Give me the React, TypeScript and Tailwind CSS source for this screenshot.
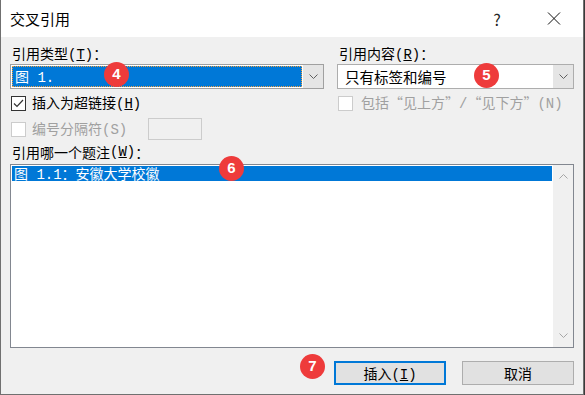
import React from 'react';

const FONT = { fontFamily: '"Noto Sans CJK SC", "Microsoft YaHei", sans-serif' };
const MONO = { fontFamily: '"Liberation Mono", "Noto Sans CJK SC", monospace' };

// Latin bits in the dialog are drawn with a fixed-width face
function M({ children }: { children: React.ReactNode }) {
  return <span style={MONO}>{children}</span>;
}

function Chevron({ up = false, color = '#606060' }: { up?: boolean; color?: string }) {
  return (
    <svg width="9" height="5" viewBox="0 0 9 5" className="block">
      <polyline
        points={up ? '0.5,4.5 4.5,0.5 8.5,4.5' : '0.5,0.5 4.5,4.5 8.5,0.5'}
        fill="none"
        stroke={color}
        strokeWidth="1"
      />
    </svg>
  );
}

function Badge({ n, className }: { n: number; className: string }) {
  return (
    <div
      className={`absolute w-[25px] h-[25px] rounded-full bg-[#ee3b3b] text-white text-[15px] font-bold flex items-center justify-center ${className}`}
      style={{ fontFamily: '"Liberation Sans", Arial, sans-serif' }}
    >
      {n}
    </div>
  );
}

function CheckBox({ checked = false, disabled = false }: { checked?: boolean; disabled?: boolean }) {
  return (
    <div
      className={`w-[15px] h-[15px] shrink-0 border bg-white flex items-center justify-center ${
        disabled ? 'border-[#cccccc]' : 'border-[#333333]'
      }`}
    >
      {checked && (
        <svg width="11" height="9" viewBox="0 0 11 9">
          <polyline points="1,4.5 4,7.5 10,1" fill="none" stroke="#333" strokeWidth="1.2" />
        </svg>
      )}
    </div>
  );
}

export default function App() {
  return (
    <div className="relative w-[585px] h-[395px] bg-[#3a3a3a] text-[14px] text-black" style={FONT}>
      <div className="w-[584px] h-[395px] border-l border-r border-b border-[#707070] bg-[#f0f0f0] flex flex-col">
        {/* Title bar */}
        <div className="h-[37px] bg-white flex items-center pl-[9px] pr-[22px]">
          <span className="text-[15px] leading-none">交叉引用</span>
          <div className="flex-1" />
          <span className="w-[20px] text-center text-[16px] leading-none text-[#222]">?</span>
          <svg width="14" height="13" viewBox="0 0 14 13" className="ml-[40px]">
            <line x1="1" y1="0.5" x2="13" y2="12.5" stroke="#111" strokeWidth="1" />
            <line x1="13" y1="0.5" x2="1" y2="12.5" stroke="#111" strokeWidth="1" />
          </svg>
        </div>

        {/* Body */}
        <div className="flex flex-col pl-[9px] pr-[9px] pt-[6px]">
          <div className="flex">
            {/* Left column */}
            <div className="w-[314px] flex flex-col">
              <div className="h-[21px] leading-[21px] pl-[2px]">
                引用类型<M>(<span className="underline">T</span>)</M>：
              </div>
              <div className="h-[25px] flex border border-[#a0a0a0] bg-white">
                <div className="flex-1 p-[1px]">
                  <div className="h-full bg-[#0078d7] border border-dotted border-[#f0a040] text-white leading-[19px] pl-[2px] whitespace-pre">
                    图<M> 1.</M>
                  </div>
                </div>
                <div className="w-[20px] bg-[#e5e5e5] flex items-center justify-center">
                  <Chevron />
                </div>
              </div>
              <div className="mt-[6px] h-[16px] flex items-center gap-[6px] pl-[1px]">
                <CheckBox checked />
                <span className="leading-[16px]">
                  插入为超链接<M>(<span className="underline">H</span>)</M>
                </span>
              </div>
              <div className="mt-[7px] h-[22px] flex items-center pl-[1px]">
                <CheckBox disabled />
                <span className="ml-[6px] w-[116px] leading-[16px] text-[#a0a0a0]">
                  编号分隔符<M>(S)</M>
                </span>
                <div className="w-[54px] h-[22px] border border-[#cccccc] bg-[#f0f0f0]" />
              </div>
            </div>

            {/* Right column */}
            <div className="ml-[13px] w-[237px] flex flex-col">
              <div className="h-[21px] leading-[21px] pl-[2px]">
                引用内容<M>(<span className="underline">R</span>)</M>：
              </div>
              <div className="h-[25px] flex border border-[#adadad] bg-white">
                <div className="flex-1 leading-[23px] pl-[7px] text-[14.5px]">只有标签和编号</div>
                <div className="w-[20px] bg-[#e5e5e5] flex items-center justify-center">
                  <Chevron />
                </div>
              </div>
              <div className="mt-[6px] h-[16px] flex items-center gap-[8px] pl-[1px]">
                <CheckBox disabled />
                <span className="leading-[16px] text-[#a0a0a0] whitespace-nowrap">
                  包括“见上方”<M>/</M>“见下方”<M>(N)</M>
                </span>
              </div>
            </div>
          </div>

          <div className="h-[24px] flex items-center pl-[2px]">
            引用哪一个题注<M>(<span className="underline">W</span>)</M>：
          </div>

          {/* Caption list */}
          <div className="h-[184px] border border-[#828790] bg-white flex">
            <div className="flex-1 p-[1px]">
              <div className="h-[15px] bg-[#0078d7] text-white leading-[15px] pl-[2px] whitespace-pre">
                图<M> 1.1</M>：安徽大学校徽
              </div>
            </div>
            <div className="w-[20px] bg-[#f0f0f0] flex flex-col items-center justify-between py-[9px]">
              <Chevron up color="#a6a6a6" />
              <Chevron color="#a6a6a6" />
            </div>
          </div>

          {/* Buttons */}
          <div className="mt-[13px] flex justify-end gap-[16px]">
            <button className="w-[112px] h-[24px] border-2 border-[#0078d7] bg-[#e1e1e1] leading-[20px]">
              插入<M>(<span className="underline">I</span>)</M>
            </button>
            <button className="w-[112px] h-[24px] border border-[#adadad] bg-[#e1e1e1] leading-[22px]">
              取消
            </button>
          </div>
        </div>
      </div>

      <Badge n={4} className="left-[104px] top-[62px]" />
      <Badge n={5} className="left-[474px] top-[63px]" />
      <Badge n={6} className="left-[219px] top-[156px]" />
      <Badge n={7} className="left-[300px] top-[354px]" />
    </div>
  );
}
